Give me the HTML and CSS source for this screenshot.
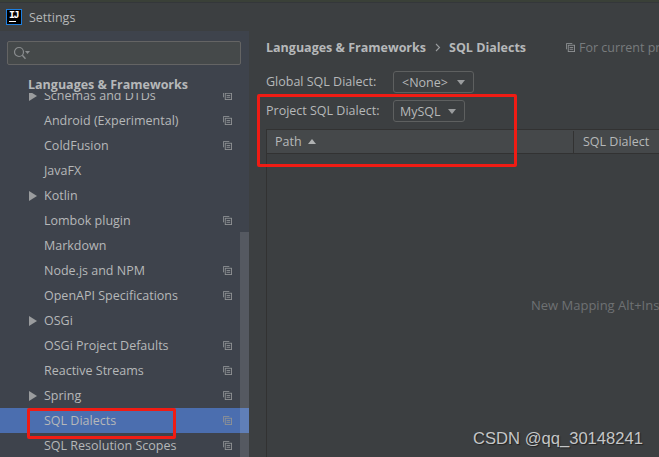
FILE: index.html
```html
<!DOCTYPE html>
<html lang="en">
<head>
<meta charset="utf-8">
<title>Settings</title>
<link rel="stylesheet" href="styles.css">
</head>
<body>
<div class="topstrip"></div>
<header class="titlebar">
  <div class="logo"><span class="logo-text">IJ</span><span class="logo-bar"></span></div>
  <span class="title">Settings</span>
</header>
<div class="content">
  <aside class="sidebar">
    <div class="searchwrap">
      <div class="search">
        <svg class="search-icon" width="17" height="14" viewBox="0 0 17 14"><circle cx="6" cy="6" r="4.5" fill="none" stroke="#8a8d8f" stroke-width="1.2"/><path d="M9.3 9.3 L12.5 12.8" stroke="#8a8d8f" stroke-width="1.4"/><path d="M12 5 h5 l-2.5 3z" fill="#8a8d8f"/></svg>
      </div>
    </div>
    <div class="section-title">Languages &amp; Frameworks</div>
    <div class="tree">
      <ul class="tree-inner">
        <li class="row"><span class="arrow"></span><span class="label">Schemas and DTDs</span><svg class="copy"><use href="#copy"/></svg></li>
        <li class="row"><span class="noarrow"></span><span class="label">Android (Experimental)</span><svg class="copy"><use href="#copy"/></svg></li>
        <li class="row"><span class="noarrow"></span><span class="label">ColdFusion</span><svg class="copy"><use href="#copy"/></svg></li>
        <li class="row"><span class="noarrow"></span><span class="label">JavaFX</span></li>
        <li class="row"><span class="arrow"></span><span class="label">Kotlin</span></li>
        <li class="row"><span class="noarrow"></span><span class="label">Lombok plugin</span><svg class="copy"><use href="#copy"/></svg></li>
        <li class="row"><span class="noarrow"></span><span class="label">Markdown</span></li>
        <li class="row"><span class="noarrow"></span><span class="label">Node.js and NPM</span><svg class="copy"><use href="#copy"/></svg></li>
        <li class="row"><span class="noarrow"></span><span class="label">OpenAPI Specifications</span><svg class="copy"><use href="#copy"/></svg></li>
        <li class="row"><span class="arrow"></span><span class="label">OSGi</span></li>
        <li class="row"><span class="noarrow"></span><span class="label">OSGi Project Defaults</span><svg class="copy"><use href="#copy"/></svg></li>
        <li class="row"><span class="noarrow"></span><span class="label">Reactive Streams</span><svg class="copy"><use href="#copy"/></svg></li>
        <li class="row"><span class="arrow"></span><span class="label">Spring</span><svg class="copy"><use href="#copy"/></svg></li>
        <li class="row selected"><span class="noarrow"></span><span class="label">SQL Dialects</span><svg class="copy"><use href="#copy"/></svg></li>
        <li class="row"><span class="noarrow"></span><span class="label">SQL Resolution Scopes</span><svg class="copy"><use href="#copy"/></svg></li>
      </ul>
      <div class="scrollthumb"></div>
    </div>
  </aside>
  <main class="main">
    <div class="breadcrumb">
      <span class="crumb">Languages &amp; Frameworks</span>
      <svg class="chev" width="6" height="9" viewBox="0 0 6 9"><path d="M1 1 L4.5 4.5 L1 8" fill="none" stroke="#9a9d9f" stroke-width="1.1"/></svg>
      <span class="crumb">SQL Dialects</span>
      <svg class="copy scope-icon"><use href="#copy"/></svg>
      <span class="scope">For current project</span>
    </div>
    <div class="field first">
      <span class="field-label">Global SQL Dialect:</span>
      <div class="combo wide"><span>&lt;None&gt;</span><span class="combo-arrow"></span></div>
    </div>
    <div class="field">
      <span class="field-label">Project SQL Dialect:</span>
      <div class="combo"><span>MySQL</span><span class="combo-arrow"></span></div>
    </div>
    <div class="table">
      <div class="thead">
        <div class="th path">Path<span class="sort"></span></div>
        <div class="th dialect">SQL Dialect</div>
      </div>
      <div class="tbody"><span class="empty">New Mapping Alt+Insert</span></div>
    </div>
  </main>
</div>
<div class="mark mark-project"></div>
<div class="mark mark-sql"></div>
<div class="watermark">CSDN @qq_30148241</div>
<svg class="defs" width="0" height="0">
  <defs>
    <symbol id="copy" viewBox="0 0 10 10">
      <path d="M0.5 7 V0.5 H7" fill="none" stroke="currentColor" stroke-width="1"/>
      <rect x="2.5" y="2.5" width="7" height="7" fill="none" stroke="currentColor" stroke-width="1"/>
      <path d="M4 5 h4 M4 7 h4" stroke="currentColor" stroke-width="1"/>
    </symbol>
  </defs>
</svg>
</body>
</html>
```

FILE: styles.css
```css
* { box-sizing: border-box; }
html, body { margin: 0; padding: 0; }
body {
  position: relative;
  width: 659px;
  height: 457px;
  overflow: hidden;
  background: #3c3f41;
  color: #b6b8b9;
  font-family: "Open Sans", "Noto Sans", sans-serif;
  font-size: 12.5px;
  display: flex;
  flex-direction: column;
}
ul { list-style: none; margin: 0; padding: 0; }
.topstrip { height: 3px; flex: none; background: #3a4038; border-bottom: 1px solid #34373a; }
.titlebar {
  flex: none;
  height: 28px;
  display: flex;
  align-items: center;
  padding-left: 6px;
  gap: 7px;
  background: #3c3f41;
}
.logo {
  width: 16px;
  height: 16px;
  background: #000;
  border: 1px solid #1d7fe0;
  display: flex;
  flex-direction: column;
  align-items: center;
  color: #fff;
}
.logo-text { font: bold 10px/9px "Liberation Mono", monospace; letter-spacing: -1.5px; margin: 1px 1px 0 0; }
.logo-bar { width: 7px; height: 1px; background: #fff; margin-top: 1px; align-self: flex-start; margin-left: 2px; }
.title { font-size: 12.5px; color: #b4b6b7; }
.content { flex: 1; display: flex; min-height: 0; }
.sidebar {
  width: 249px;
  flex: none;
  background: #3e434c;
  display: flex;
  flex-direction: column;
  min-height: 0;
}
.searchwrap { padding: 10px 8px 0 7px; flex: none; }
.search {
  height: 24px;
  background: #45494a;
  border: 1px solid #646464;
  border-radius: 2px;
  display: flex;
  align-items: center;
  padding-left: 5px;
}
.section-title {
  flex: none;
  height: 17px;
  margin-top: 11px;
  padding-left: 28px;
  font-weight: 700;
  font-size: 12.5px;
  line-height: 17px;
  background: #3e434c;
  position: relative;
  z-index: 1;
}
.tree { flex: 1; position: relative; overflow: hidden; min-height: 0; }
.tree-inner { margin-top: -10px; }
.row { height: 25px; display: flex; align-items: center; padding-left: 29px; padding-right: 17px; }
.row.selected { background: #4b6eaf; }
.arrow {
  width: 15px;
  flex: none;
  height: 0;
  border-left: 8px solid #9a9c9e;
  border-top: 5px solid transparent;
  border-bottom: 5px solid transparent;
  border-right: 7px solid transparent;
}
.noarrow { width: 15px; flex: none; }
.label { flex: 1; white-space: nowrap; }
.copy { width: 9px; height: 9px; color: #8f9294; flex: none; }
.scrollthumb {
  position: absolute;
  right: 0;
  top: 139px;
  bottom: 0;
  width: 9px;
  background: rgba(255, 255, 255, 0.12);
}
.main { flex: 1; min-width: 0; padding: 7px 0 0 17px; overflow: hidden; display: flex; flex-direction: column; }
.breadcrumb { display: flex; align-items: center; height: 18px; white-space: nowrap; }
.crumb { font-weight: 700; }
.chev { margin: 0 8px 0 9px; flex: none; }
.scope-icon { margin-left: 40px; margin-right: 4px; }
.scope { color: #787b7d; }
.field { display: flex; align-items: center; height: 22px; white-space: nowrap; }
.field.first { margin-top: 15px; }
.field + .field { margin-top: 7px; }
.field-label { width: 127px; flex: none; margin-bottom: 2px; }
.combo {
  height: 22px;
  width: 72px;
  border: 1px solid #5e6060;
  border-radius: 3px;
  background: #3c3f41;
  display: flex;
  align-items: center;
  justify-content: space-between;
  padding: 0 8px 0 6px;
}
.combo.wide { width: 81px; padding-left: 8px; }
.combo-arrow { width: 0; height: 0; border-left: 4.5px solid transparent; border-right: 4.5px solid transparent; border-top: 5px solid #9a9c9e; }
.table { flex: 1; display: flex; flex-direction: column; margin-top: 7px; border-left: 1px solid #323232; min-height: 0; }
.thead { flex: none; height: 25px; display: flex; background: #45484a; border-top: 1px solid #323232; border-bottom: 1px solid #323232; align-items: center; }
.th { height: 22px; display: flex; align-items: center; padding-left: 8px; white-space: nowrap; }
.path { width: 307px; flex: none; border-right: 1px solid #323232; }
.dialect { flex: 1; padding-left: 9px; }
.sort { width: 0; height: 0; margin-left: 6px; border-left: 4.5px solid transparent; border-right: 4.5px solid transparent; border-bottom: 5px solid #b0b2b3; }
.tbody { flex: 1; position: relative; overflow: hidden; }
.empty { position: absolute; left: 264px; top: 142px; color: #6e7173; font-size: 13px; white-space: nowrap; }
.mark { position: absolute; border: 3px solid #f01c14; border-radius: 2px; pointer-events: none; }
.mark-project { left: 257px; top: 94px; width: 260px; height: 73px; }
.mark-sql { left: 27px; top: 408px; width: 149px; height: 31px; }
.watermark {
  position: absolute;
  left: 473px;
  top: 429px;
  font-family: "Liberation Sans", sans-serif;
  font-size: 16.6px;
  color: #c4c6c7;
  text-shadow: 1px 1px 1px #222;
  white-space: nowrap;
}
.defs { position: absolute; }
```
